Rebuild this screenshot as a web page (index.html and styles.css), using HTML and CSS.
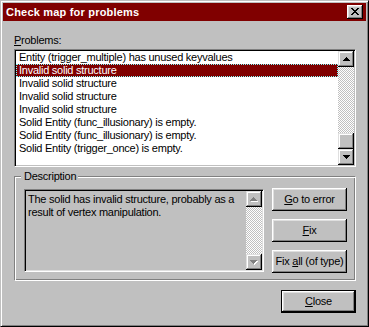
FILE: index.html
```html
<!DOCTYPE html>
<html>
<head>
<meta charset="utf-8">
<title>Check map for problems</title>
<link rel="stylesheet" href="styles.css">
</head>
<body>
<div class="window">
  <div class="titlebar">
    <span class="title">Check map for problems</span>
    <button class="tclose" type="button"><svg width="8" height="7" viewBox="0 0 8 7" shape-rendering="crispEdges"><path fill="#000" d="M0 0h2v1H0z M6 0h2v1H6z M1 1h2v1H1z M5 1h2v1H5z M2 2h4v1H2z M3 3h2v1H3z M2 4h4v1H2z M1 5h2v1H1z M5 5h2v1H5z M0 6h2v1H0z M6 6h2v1H6z"/></svg></button>
  </div>
  <div class="content">
    <div class="label"><u>P</u>roblems:</div>
    <div class="listbox">
      <ul class="items">
        <li>Entity (trigger_multiple) has unused keyvalues</li>
        <li class="sel">Invalid solid structure</li>
        <li>Invalid solid structure</li>
        <li>Invalid solid structure</li>
        <li>Invalid solid structure</li>
        <li>Solid Entity (func_illusionary) is empty.</li>
        <li>Solid Entity (func_illusionary) is empty.</li>
        <li>Solid Entity (trigger_once) is empty.</li>
      </ul>
      <div class="vscroll">
        <div class="sbtn"><svg width="7" height="4" viewBox="0 0 7 4" shape-rendering="crispEdges"><path fill="#000" d="M3 0h1v1H3z M2 1h3v1H2z M1 2h5v1H1z M0 3h7v1H0z"/></svg></div>
        <div class="track"></div>
        <div class="thumb"></div>
        <div class="sbtn"><svg width="7" height="4" viewBox="0 0 7 4" shape-rendering="crispEdges"><path fill="#000" d="M0 0h7v1H0z M1 1h5v1H1z M2 2h3v1H2z M3 3h1v1H3z"/></svg></div>
      </div>
    </div>
    <div class="group">
      <div class="legend">Description</div>
      <div class="grouprow">
        <div class="textbox">
          <div class="tbtext">The solid has invalid structure, probably as a<br>result of vertex manipulation.</div>
          <div class="vscroll">
            <div class="sbtn"><svg width="8" height="5" viewBox="0 0 8 5" shape-rendering="crispEdges"><path fill="#fff" d="M4 1h1v1H4z M3 2h3v1H3z M2 3h5v1H2z M1 4h7v1H1z"/><path fill="#808080" d="M3 0h1v1H3z M2 1h3v1H2z M1 2h5v1H1z M0 3h7v1H0z"/></svg></div>
            <div class="track"></div>
            <div class="sbtn"><svg width="8" height="5" viewBox="0 0 8 5" shape-rendering="crispEdges"><path fill="#fff" d="M1 1h7v1H1z M2 2h5v1H2z M3 3h3v1H3z M4 4h1v1H4z"/><path fill="#808080" d="M0 0h7v1H0z M1 1h5v1H1z M2 2h3v1H2z M3 3h1v1H3z"/></svg></div>
          </div>
        </div>
        <div class="btncol">
          <button class="btn" type="button"><span><u>G</u>o to error</span></button>
          <button class="btn" type="button"><span><u>F</u>ix</span></button>
          <button class="btn" type="button"><span>Fix <u>a</u>ll (of type)</span></button>
        </div>
      </div>
    </div>
    <div class="footer">
      <button class="btn default" type="button"><span><u>C</u>lose</span></button>
    </div>
  </div>
</div>
</body>
</html>
```

FILE: styles.css
```css
html, body {
  margin: 0;
  padding: 0;
  background: #c0c0c0;
}

body {
  font-family: "Liberation Sans", Arial, sans-serif;
  font-size: 11px;
  letter-spacing: -0.25px;
  color: #000;
}

.window {
  width: 369px;
  height: 327px;
  box-sizing: border-box;
  background: #c0c0c0;
  border: 1px solid;
  border-color: #c0c0c0 #000 #000 #c0c0c0;
  box-shadow: inset 1px 1px #fff, inset -1px -1px #808080;
  padding: 2px;
}

.titlebar {
  height: 18px;
  background: #800000;
  display: flex;
  align-items: center;
  justify-content: space-between;
  padding: 0 3px 0 3px;
}

.title {
  color: #fff;
  font-weight: bold;
  letter-spacing: 0.2px;
  line-height: 18px;
}

.tclose {
  width: 16px;
  height: 14px;
  padding: 0 0 1px 0;
  margin: 0;
  border: none;
  background: #c0c0c0;
  box-shadow: inset -1px -1px #000, inset 1px 1px #fff, inset -2px -2px #808080, inset 2px 2px #dfdfdf;
  display: flex;
  align-items: center;
  justify-content: center;
}

.tclose svg {
  display: block;
}

.content {
  padding: 0 10px 0 11px;
}

.label {
  margin-top: 13px;
  line-height: 13px;
  height: 13px;
  margin-bottom: 2px;
}

u {
  text-decoration: underline;
  text-underline-offset: 1px;
}

.listbox {
  height: 118px;
  box-sizing: border-box;
  display: flex;
  background: #fff;
  border: 1px solid;
  border-color: #808080 #fff #fff #808080;
  box-shadow: inset 1px 1px #000, inset -1px -1px #c0c0c0;
  padding: 1px;
}

.items {
  flex: 1;
  list-style: none;
  margin: 0;
  padding: 0;
  overflow: hidden;
}

.items li {
  height: 13px;
  line-height: 13px;
  padding-left: 3px;
  white-space: nowrap;
  overflow: hidden;
}

.items li.sel {
  background: #800000;
  color: #fff;
  outline: 1px dotted #7fffff;
  outline-offset: -1px;
}

.vscroll {
  width: 16px;
  display: flex;
  flex-direction: column;
}

.sbtn {
  height: 16px;
  flex: none;
  background: #c0c0c0;
  box-shadow: inset -1px -1px #000, inset 1px 1px #dfdfdf, inset -2px -2px #808080, inset 2px 2px #fff;
  display: flex;
  align-items: center;
  justify-content: center;
}

.sbtn svg {
  display: block;
}

.track {
  flex: 1;
  background: repeating-conic-gradient(#c0c0c0 0 25%, #fff 0 50%) 0 0 / 2px 2px;
}

.thumb {
  height: 16px;
  flex: none;
  background: #c0c0c0;
  box-shadow: inset -1px -1px #000, inset 1px 1px #dfdfdf, inset -2px -2px #808080, inset 2px 2px #fff;
}

.group {
  margin-top: 9px;
  box-sizing: border-box;
  border: 1px solid;
  border-color: #808080 #fff #fff #808080;
  box-shadow: inset 1px 1px #fff, inset -1px -1px #808080;
  padding: 0 8px 7px 9px;
}

.legend {
  width: fit-content;
  margin-top: -7px;
  margin-left: -3px;
  padding: 0 2px 0 3px;
  height: 13px;
  line-height: 13px;
  background: #c0c0c0;
}

.grouprow {
  margin-top: 5px;
  display: flex;
  align-items: flex-start;
  justify-content: space-between;
}

.textbox {
  width: 240px;
  height: 83px;
  margin-top: 1px;
  box-sizing: border-box;
  display: flex;
  border: 1px solid;
  border-color: #808080 #fff #fff #808080;
  box-shadow: inset 1px 1px #000, inset -1px -1px #dfdfdf;
  padding: 1px;
}

.tbtext {
  flex: 1;
  padding: 2px 2px;
  line-height: 13px;
  white-space: nowrap;
  overflow: hidden;
}

.btncol {
  width: 75px;
  display: flex;
  flex-direction: column;
  gap: 8px;
}

.btn {
  height: 23px;
  width: 75px;
  margin: 0;
  padding: 0;
  border: none;
  background: #c0c0c0;
  font: inherit;
  letter-spacing: inherit;
  color: #000;
  box-shadow: inset -1px -1px #000, inset 1px 1px #fff, inset -2px -2px #808080, inset 2px 2px #dfdfdf;
  display: flex;
  align-items: center;
  justify-content: center;
  line-height: 13px;
  white-space: nowrap;
}

.footer {
  margin-top: 9px;
  display: flex;
  justify-content: flex-end;
}

.btn.default {
  box-sizing: border-box;
  border: 1px solid #000;
  box-shadow: inset -1px -1px #000, inset 1px 1px #fff, inset -2px -2px #808080, inset 2px 2px #dfdfdf;
}
```
